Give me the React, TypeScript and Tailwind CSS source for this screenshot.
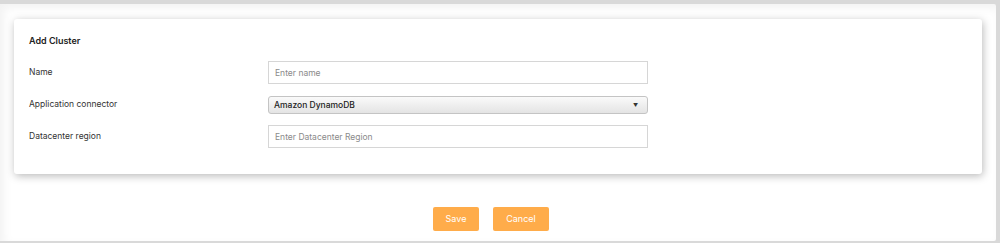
import { useState } from "react";

const font = { fontFamily: "Inter, 'Noto Sans', sans-serif" };

export default function App() {
  const [name, setName] = useState("");
  const [region, setRegion] = useState("");

  return (
    <div
      className="h-[243px] w-[1000px] bg-[#d9d9d9] pt-[4px] pr-[4px] pb-[2px] text-[#333]"
      style={font}
    >
      <div className="flex h-full flex-col bg-white rounded-r-[2px] shadow-[inset_4px_4px_10px_rgba(0,0,0,0.05)]">
        {/* Card */}
        <div className="mx-[14px] mt-[15px] h-[155px] rounded-[3px] bg-white pl-[15px] pt-[16px] shadow-[1px_2px_8px_rgba(0,0,0,0.28)]">
          <h2 className="text-[9px] leading-[12px] font-semibold text-[#222]">
            Add Cluster
          </h2>

          <div className="mt-[14px] grid grid-cols-[239px_380px] items-center gap-y-[12px]">
            <label className="text-[8.5px] leading-[12px] -mt-[2px]">Name</label>
            <input
              value={name}
              onChange={(e) => setName(e.target.value)}
              placeholder="Enter name"
              className="h-[23px] border border-[#d6d6d6] px-[6px] text-[8.5px] text-[#333] placeholder:text-[#8a8a8a] outline-none"
            />

            <label className="text-[8.5px] leading-[12px] -mt-[2px]">
              Application connector
            </label>
            <div className="relative h-[18px] rounded-[3px] border border-[#c4c4c4] bg-gradient-to-b from-[#fafafa] to-[#e4e4e4] pl-[5px] text-[8.5px] leading-[16px] font-medium text-[#222]">
              Amazon DynamoDB
              <span className="absolute right-[9px] top-0 text-[5px] leading-[16px] text-[#333]">
                ▼
              </span>
            </div>

            <label className="text-[8.5px] leading-[12px] -mt-[3px]">
              Datacenter region
            </label>
            <input
              value={region}
              onChange={(e) => setRegion(e.target.value)}
              placeholder="Enter Datacenter Region"
              className="-mt-[1px] h-[23px] border border-[#d6d6d6] px-[6px] text-[8.5px] text-[#333] placeholder:text-[#8a8a8a] outline-none"
            />
          </div>
        </div>

        {/* Actions */}
        <div className="mt-[33px] flex justify-center gap-[14px] pr-[14px]">
          <button className="h-[24px] w-[46px] rounded-[2px] bg-[#ffac4a] text-[9px] text-white">
            Save
          </button>
          <button className="h-[24px] w-[56px] rounded-[2px] bg-[#ffac4a] text-[9px] text-white">
            Cancel
          </button>
        </div>
      </div>
    </div>
  );
}
